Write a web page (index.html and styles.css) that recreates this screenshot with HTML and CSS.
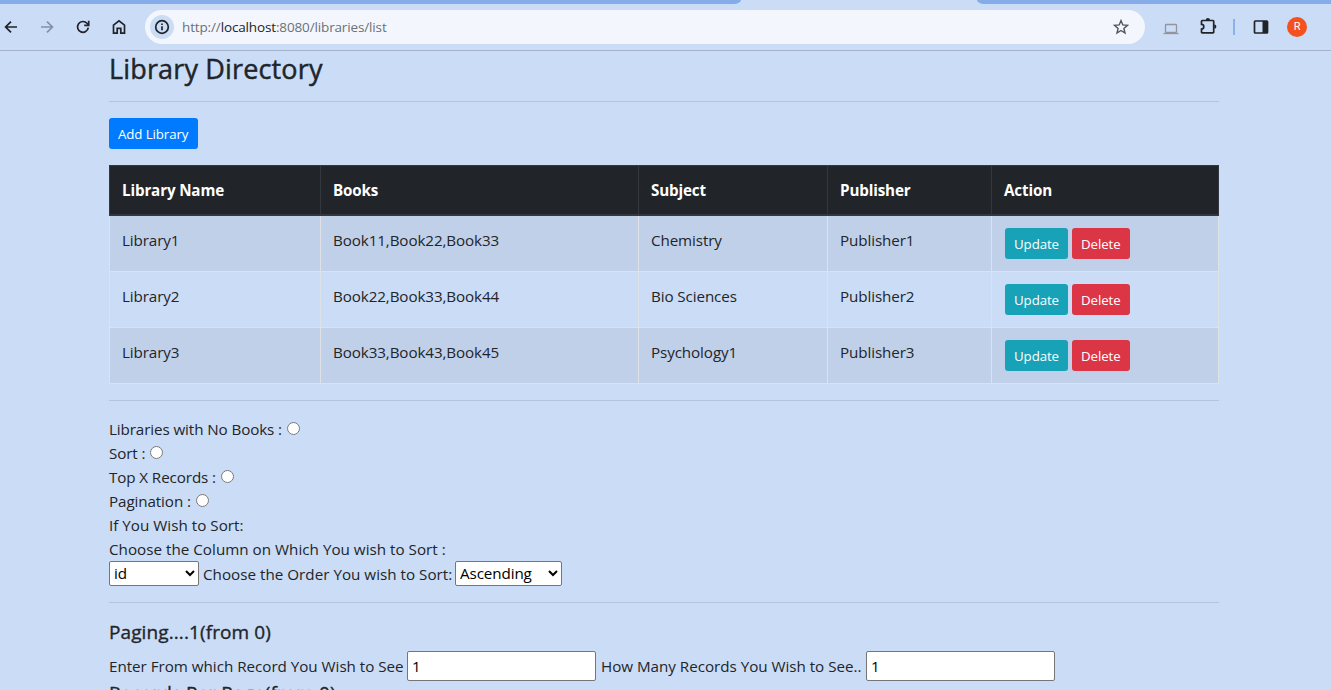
FILE: index.html
```html
<!DOCTYPE html>
<html lang="en">
<head>
<meta charset="utf-8">
<title>Library Directory</title>
<link rel="stylesheet" href="styles.css">
</head>
<body>
<div class="tabstrip"><div class="tab-left"></div><div class="tab-right"></div></div>
<header class="toolbar">
  <nav class="nav">
    <svg class="icon" viewBox="0 0 16 16"><path d="M14 8H3M8 2.6L2.6 8 8 13.4"/></svg>
    <svg class="icon muted" viewBox="0 0 16 16"><path d="M2 8h11M8 2.6L13.4 8 8 13.4"/></svg>
    <svg class="icon" viewBox="0 0 16 16"><path d="M13.3 8.7A5.4 5.4 0 1 1 12 4.3L13.6 6"/><path d="M13.7 1.8v4.5H9.2"/></svg>
    <svg class="icon" viewBox="0 0 16 16"><path d="M2.5 14.2V6.2L8 1.8l5.5 4.400v8H9.800V9.400H6.200v4.800z"/></svg>
  </nav>
  <div class="omnibox">
    <span class="site-info"><svg class="icon" viewBox="0 0 16 16"><circle cx="8" cy="8" r="6.3"/><path d="M8 7.2v4M8 4.5v1.6"/></svg></span>
    <span class="url">http://<b>localhost</b>:8080/libraries/list</span>
    <svg class="icon star" viewBox="0 0 16 16"><path d="M8 1.6l1.8 4.3 4.700.4-3.600 3.100 1.100 4.600L8 11.500 4 14l1.100-4.600L1.500 6.300l4.700-.4z"/></svg>
  </div>
  <div class="actions">
    <svg class="icon laptop" viewBox="0 0 16 16"><rect x="2.500" y="3.500" width="11" height="8" rx=".8"/><path d="M.5 12.500h15"/></svg>
    <svg class="icon puzzle" viewBox="0 0 18 18"><path d="M3.500 3.500H14a.7.7 0 0 1 .7.700v11a.7.7 0 0 1-.7.700H3.200a.7.7 0 0 1-.7-.7V12a2.300 2.300 0 0 0 0-4.600V4.200a.7.7 0 0 1 .7-.7z"/><path class="solid" d="M6.800 3a2.100 2.100 0 0 1 4.200 0zM15.300 7.600a2.100 2.100 0 0 1 0 4.200z"/></svg>
    <span class="divider"></span>
    <svg class="icon panel" viewBox="0 0 16 16"><rect x="1.500" y="2" width="13" height="12" rx=".7"/><path class="solid" d="M9.500 2h5v12h-5z"/></svg>
    <span class="avatar">R</span>
  </div>
</header>
<main class="container">
  <h1 class="title">Library Directory</h1>
  <hr>
  <a class="btn primary">Add Library</a>
  <table class="libraries">
    <colgroup><col class="c-name"><col class="c-books"><col class="c-subject"><col class="c-publisher"><col></colgroup>
    <thead><tr><th>Library Name</th><th>Books</th><th>Subject</th><th>Publisher</th><th>Action</th></tr></thead>
    <tbody>
      <tr><td>Library1</td><td>Book11,Book22,Book33</td><td>Chemistry</td><td>Publisher1</td><td><div class="buttons"><a class="btn info">Update</a><a class="btn danger">Delete</a></div></td></tr>
      <tr><td>Library2</td><td>Book22,Book33,Book44</td><td>Bio Sciences</td><td>Publisher2</td><td><div class="buttons"><a class="btn info">Update</a><a class="btn danger">Delete</a></div></td></tr>
      <tr><td>Library3</td><td>Book33,Book43,Book45</td><td>Psychology1</td><td>Publisher3</td><td><div class="buttons"><a class="btn info">Update</a><a class="btn danger">Delete</a></div></td></tr>
    </tbody>
  </table>
  <hr>
  <div class="line"><span class="t-nobooks">Libraries with No Books :</span><input type="radio"></div>
  <div class="line"><span class="t-sort">Sort :</span><input type="radio"></div>
  <div class="line"><span class="t-top">Top X Records :</span><input type="radio"></div>
  <div class="line"><span class="t-page">Pagination :</span><input type="radio"></div>
  <div class="line wide">If You Wish to Sort:</div>
  <div class="line wide">Choose the Column on Which You wish to Sort :</div>
  <div class="sort-row"><select class="column"><option>id</option></select><span class="t-order wide">Choose the Order You wish to Sort:</span><select class="order"><option>Ascending</option></select></div>
  <hr>
  <h2 class="subtitle">Paging....1(from 0)</h2>
  <div class="paging-row"><span class="t-from">Enter From which Record You Wish to See</span><input class="text" type="text" value="1"><span class="t-many">How Many Records You Wish to See..</span><input class="text" type="text" value="1"></div>
  <h2 class="subtitle">Records Per Page(from 0)</h2>
</main>
</body>
</html>
```
FILE: styles.css
```css
* { box-sizing: border-box; }
html { height: 100%; overflow: hidden; }
body { margin: 0; height: 690px; overflow: hidden; background: #cbdcf6; color: #212529; font: 15.2px/24px "Open Sans", "Noto Sans", sans-serif; letter-spacing: -.1px; }
.tabstrip { display: flex; justify-content: space-between; height: 4px; }
.tab-left, .tab-right { background: #85ace9; }
.tab-left { width: 741px; border-bottom-right-radius: 9px 5px; }
.tab-right { width: 354px; border-bottom-left-radius: 9px 5px; }
.toolbar { display: flex; height: 47px; border-bottom: 1px solid #a5b0c9; }
.icon { width: 16px; height: 16px; flex: none; fill: none; stroke: #202328; stroke-width: 1.7; }
.icon .solid { fill: #202328; stroke: none; }
.icon.muted { stroke: #8490a8; }
.nav { display: flex; gap: 20px; align-items: center; width: 145px; padding-left: 3px; }
.omnibox { display: flex; align-items: center; width: 1000px; height: 34px; margin-top: 6px; padding: 0 16px 0 5px; border-radius: 17px; background: #f3f7fd; }
.site-info { display: flex; align-items: center; justify-content: center; width: 24px; height: 24px; border-radius: 50%; background: #cbdcf6; }
.url { flex: 1; margin-left: 8px; color: #6c7078; font-size: 13.5px; letter-spacing: -.14px; }
.url b { font-weight: 400; color: #202328; }
.icon.star { stroke: #50545b; stroke-width: 1.4; }
.actions { display: flex; align-items: center; padding-left: 18px; }
.icon.laptop { stroke: #92959b; stroke-width: 1.3; margin-top: 3px; }
.icon.puzzle { width: 18px; height: 18px; margin-left: 20px; margin-top: -3px; }
.divider { width: 2px; height: 16px; margin-left: 16px; background: #8bb1eb; }
.panel { margin-left: 18px; }
.avatar { width: 20px; height: 20px; margin-left: 18px; border-radius: 50%; background: #f4511e; color: #fff; text-align: center; font: 11px/20px Roboto, sans-serif; }
.container { width: 1110px; margin-left: 109px; }
.title { margin: 0; height: 34px; font-size: 27px; line-height: 36px; font-weight: 500; letter-spacing: .15px; -webkit-text-stroke: .45px #212529; }
hr { margin: 16px 0; border: 0; border-top: 1px solid #b4c4de; }
.btn { display: block; width: max-content; height: 31px; border-radius: 3px; padding: 0 9px; color: #fff; font-size: 13.3px; line-height: 32px; }
.primary { width: 89px; background: #007bff; }
.info { width: 63px; background: #17a2b8; }
.danger { width: 58px; background: #dc3545; }
.buttons { display: flex; gap: 4px; padding-left: 1px; }
.libraries { width: 1110px; margin: 16px 0; border-collapse: collapse; table-layout: fixed; }
.c-name { width: 211px; } .c-books { width: 318px; } .c-subject { width: 189px; } .c-publisher { width: 164px; }
th, td { padding: 12px; text-align: left; vertical-align: top; border: 1px solid #dee2e6; }
th { height: 49px; padding-bottom: 11px; background: #212529; color: #fff; border-color: #32383e; border-bottom-width: 2px; font-weight: 700; letter-spacing: -.15px; }
td { height: 56px; }
tbody tr:nth-child(odd) { background: #c1d0e9; }
.line { display: flex; height: 24px; white-space: nowrap; }
.line input { width: 13px; height: 13px; margin: 5px 0 0 5px; }
.sort-row { display: flex; gap: 4px; height: 25px; line-height: 27px; white-space: nowrap; }
.wide { letter-spacing: .02px; }
select { height: 25px; font: inherit; line-height: 22px; letter-spacing: inherit; color: #000; background: #fff; border: 1px solid #767676; border-radius: 2px; padding: 0; }
.column { width: 90px; }
.order { width: 107px; }
.t-nobooks { width: 173px; } .t-sort { width: 36px; } .t-top { width: 107px; } .t-page { width: 82px; } .t-order { width: 248px; }
.subtitle { margin: 0 0 8px; height: 24px; font-size: 19px; line-height: 26px; font-weight: 500; letter-spacing: .1px; -webkit-text-stroke: .35px #212529; }
.paging-row + .subtitle { line-height: 24px; }
.paging-row { display: flex; height: 30px; line-height: 30px; white-space: nowrap; letter-spacing: -.02px; }
.text { width: 189px; height: 30px; padding: 1px 4px; border: 1px solid #767676; border-radius: 2px; font: inherit; color: #000; background: #fff; }
.t-from { width: 298px; } .t-many { width: 270px; padding-left: 5px; }
```
